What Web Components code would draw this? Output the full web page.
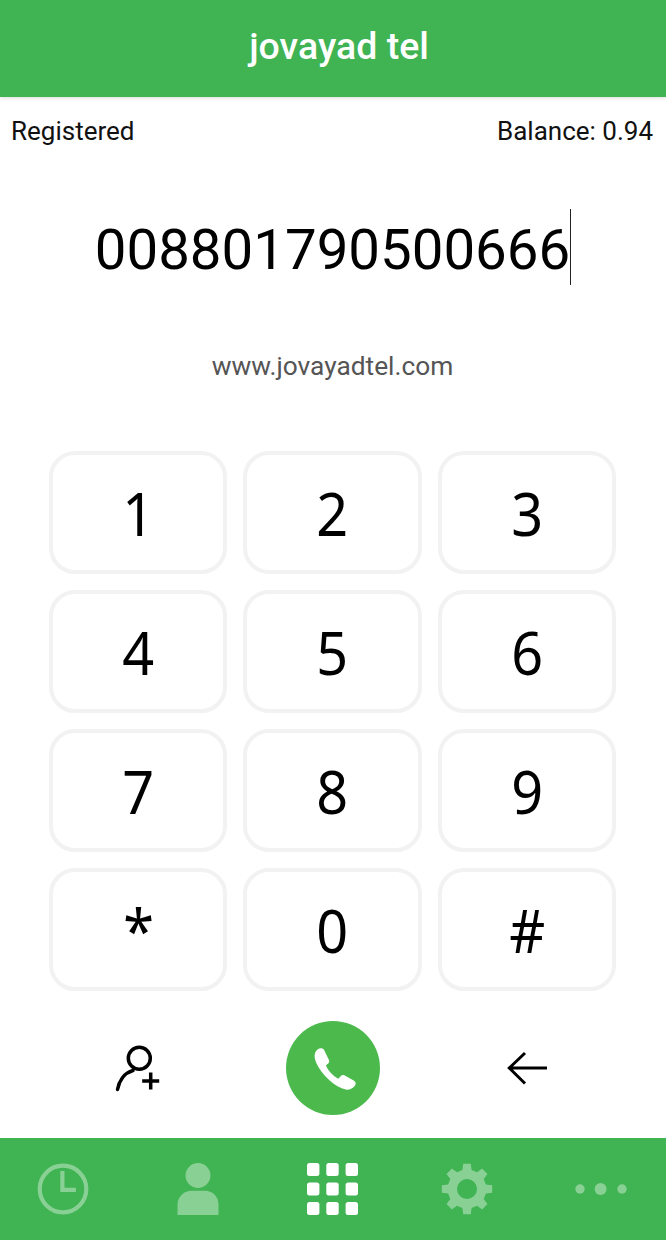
<!DOCTYPE html>
<html>
<head>
<meta charset="utf-8">
<title>jovayad tel</title>
<style>
  html, body { margin: 0; padding: 0; background: #fff; }
  body { font-family: Roboto, sans-serif; }
</style>
</head>
<body>
<dialer-app></dialer-app>

<script>
class AppHeader extends HTMLElement {
    constructor() {
        super();
        this.attachShadow({ mode: 'open' });
        this.shadowRoot.innerHTML = `
            <style>
                :host {
                    display: flex;
                    align-items: center;
                    justify-content: center;
                    height: 97px;
                    padding: 0 0 5px 12px;
                    box-sizing: border-box;
                    background: #40b353;
                    color: #fff;
                    font: 500 37.5px Roboto, sans-serif;
                    box-shadow: 0 1px 4px rgba(0,0,0,0.14);
                    position: relative;
                }
            </style>
            <slot></slot>
        `;
    }
}

class StatusRow extends HTMLElement {
    constructor() {
        super();
        this.attachShadow({ mode: 'open' });
        this.shadowRoot.innerHTML = `
            <style>
                :host {
                    display: flex;
                    justify-content: space-between;
                    padding: 17px 13px 0 11px;
                    height: 34px;
                    color: #111;
                    font: 26px/34px Roboto, sans-serif;
                }
            </style>
            <span>${this.getAttribute('left')}</span>
            <span>${this.getAttribute('right')}</span>
        `;
    }
}

class NumberDisplay extends HTMLElement {
    constructor() {
        super();
        this.attachShadow({ mode: 'open' });
        this.shadowRoot.innerHTML = `
            <style>
                :host {
                    display: flex;
                    justify-content: center;
                    align-items: center;
                    margin-top: 61px;
                    height: 76px;
                    color: #000;
                    font: 56.4px/70px Roboto, sans-serif;
                }
                .digits { padding-top: 6px; }
                .caret {
                    width: 1px;
                    height: 76px;
                    background: #222;
                }
            </style>
            <span class="digits"><slot></slot></span><span class="caret"></span>
        `;
    }
}

class SiteLink extends HTMLElement {
    constructor() {
        super();
        this.attachShadow({ mode: 'open' });
        this.shadowRoot.innerHTML = `
            <style>
                :host {
                    display: block;
                    margin-top: 66px;
                    padding-right: 1px;
                    text-align: center;
                    color: #555;
                    font: 26.3px/30px Roboto, sans-serif;
                }
            </style>
            <slot></slot>
        `;
    }
}

class DialKey extends HTMLElement {
    constructor() {
        super();
        this.attachShadow({ mode: 'open' });
        this.shadowRoot.innerHTML = `
            <style>
                :host {
                    display: flex;
                    align-items: center;
                    justify-content: center;
                    box-sizing: border-box;
                    height: 123px;
                    border: 4px solid #f2f2f2;
                    border-radius: 26px;
                    color: #000;
                    font: 60px "Noto Sans", sans-serif;
                }
                span { display: block; transform: scaleX(0.93); }
            </style>
            <span><slot></slot></span>
        `;
    }
}

class DialPad extends HTMLElement {
    constructor() {
        super();
        this.attachShadow({ mode: 'open' });
        this.shadowRoot.innerHTML = `
            <style>
                :host {
                    display: grid;
                    grid-template-columns: repeat(3, 178.3px);
                    grid-auto-rows: 123px;
                    column-gap: 16.2px;
                    row-gap: 16px;
                    margin-top: 70px;
                    padding-left: 49px;
                }
            </style>
            <slot></slot>
        `;
    }
}

class CallActions extends HTMLElement {
    constructor() {
        super();
        this.attachShadow({ mode: 'open' });
        this.shadowRoot.innerHTML = `
            <style>
                :host {
                    display: grid;
                    grid-template-columns: 100px 94px 100px;
                    justify-content: center;
                    column-gap: 97px;
                    align-items: center;
                    margin-top: 30px;
                    height: 94px;
                }
                .cell { display: flex; justify-content: center; }
                svg { display: block; }
                .call {
                    width: 94px;
                    height: 94px;
                    border-radius: 50%;
                    background: #4cb94d;
                }
            </style>
            <div class="cell">
                <svg width="56" height="56" viewBox="1 0 56 56" fill="none" stroke="#000" stroke-width="3.500">
                    <circle cx="29.3" cy="18.3" r="11"/>
                    <path d="M7.500 49.500C9 41 14 33 23 30.500" stroke-linecap="round"/>
                    <path d="M40.700 32.500v17M32.200 41h17"/>
                </svg>
            </div>
            <div class="call">
                <svg width="94" height="94" viewBox="18 18 280 280" fill="#fff">
                    <path d="M112 103C118 98 128 98 131 104L146 134C148 139 146 143 142 146L137 150C142 165 158 182 174 190L180 183C184 179 188 178 193 180L221 196C227 200 227 207 222 212C214 220 206 224 196 222C165 215 125 180 108 142C102 128 100 113 112 103Z"/>
                </svg>
            </div>
            <div class="cell">
                <svg width="48" height="40" viewBox="1 0 48 40" fill="none" stroke="#000" stroke-width="3">
                    <path d="M45 20H7M23 5 7.300 20 23 35.500"/>
                </svg>
            </div>
        `;
    }
}

class TabItem extends HTMLElement {
    constructor() {
        super();
        this.attachShadow({ mode: 'open' });
        this.shadowRoot.innerHTML = `
            <style>
                :host {
                    display: flex;
                    align-items: center;
                    justify-content: center;
                    opacity: 0.38;
                    color: #fff;
                }
                :host([active]) { opacity: 1; }
            </style>
            <slot></slot>
        `;
    }
}

class TabBar extends HTMLElement {
    constructor() {
        super();
        this.attachShadow({ mode: 'open' });
        this.shadowRoot.innerHTML = `
            <style>
                :host {
                    display: grid;
                    grid-template-columns: repeat(5, 134.5px);
                    width: 674px;
                    height: 102px;
                    margin: 23px 0 0 -4px;
                    background: #40b353;
                }
            </style>
            <slot></slot>
        `;
    }
}

// 8 tooth gear, centred on 26,26
function gearPath() {
    let d = '';
    for (let i = 0; i < 8; i++) {
        const a = i * Math.PI / 4 - Math.PI / 2;
        const pts = [[19.5, -0.24], [25.5, -0.15], [25.5, 0.15], [19.5, 0.24]];
        pts.forEach(([r, o], n) => {
            const x = 26 + r * Math.cos(a + o);
            const y = 26 + r * Math.sin(a + o);
            d += (i === 0 && n === 0 ? 'M' : 'L') + x.toFixed(1) + ' ' + y.toFixed(1);
        });
    }
    return d + 'ZM36 26a10 10 0 1 0-20 0a10 10 0 1 0 20 0Z';
}

class DialerApp extends HTMLElement {
    constructor() {
        super();
        this.attachShadow({ mode: 'open' });
        const keys = ['1','2','3','4','5','6','7','8','9','*','0','#'];
        const grid = [];
        for (const y of [0, 19.5, 39]) {
            for (const x of [0, 19.3, 38.6]) {
                grid.push(`<rect x="${x}" y="${y}" width="12.400" height="13" rx="2.500"/>`);
            }
        }
        this.shadowRoot.innerHTML = `
            <style>
                :host { display: block; width: 666px; height: 1240px; overflow: hidden; background: #fff; }
                svg { display: block; }
            </style>
            <app-header>jovayad tel</app-header>
            <status-row left="Registered" right="Balance: 0.94"></status-row>
            <number-display>008801790500666</number-display>
            <site-link>www.jovayadtel.com</site-link>
            <dial-pad>
                ${keys.map(k => `<dial-key>${k}</dial-key>`).join('')}
            </dial-pad>
            <call-actions></call-actions>
            <tab-bar>
                <tab-item>
                    <svg width="52" height="52" viewBox="0 0 52 52" fill="none" stroke="#fff" stroke-width="4.200">
                        <circle cx="26" cy="26" r="23.300"/>
                        <path d="M25.400 8v18.800h13.500"/>
                    </svg>
                </tab-item>
                <tab-item>
                    <svg width="42" height="52" viewBox="0 0 42 52" fill="#fff">
                        <circle cx="21" cy="12.500" r="12.500"/>
                        <path d="M0.500 52V41.500C0.500 33 8 27.800 14 27.800h14C35 27.800 41.500 33 41.500 41.500V52z"/>
                    </svg>
                </tab-item>
                <tab-item active>
                    <svg width="51" height="52" viewBox="0 0 51 52" fill="#fff">
                        ${grid.join('')}
                    </svg>
                </tab-item>
                <tab-item>
                    <svg width="52" height="52" viewBox="0 0 52 52" fill="#fff" fill-rule="evenodd">
                        <path d="${gearPath()}"/>
                    </svg>
                </tab-item>
                <tab-item>
                    <svg width="52" height="14" viewBox="0 0 52 14" fill="#fff">
                        <circle cx="5" cy="7" r="4.700"/><circle cx="25.600" cy="7" r="6"/><circle cx="47" cy="7" r="4.700"/>
                    </svg>
                </tab-item>
            </tab-bar>
        `;
    }
}

customElements.define('app-header', AppHeader);
customElements.define('status-row', StatusRow);
customElements.define('number-display', NumberDisplay);
customElements.define('site-link', SiteLink);
customElements.define('dial-key', DialKey);
customElements.define('dial-pad', DialPad);
customElements.define('call-actions', CallActions);
customElements.define('tab-item', TabItem);
customElements.define('tab-bar', TabBar);
customElements.define('dialer-app', DialerApp);
</script>
</body>
</html>
